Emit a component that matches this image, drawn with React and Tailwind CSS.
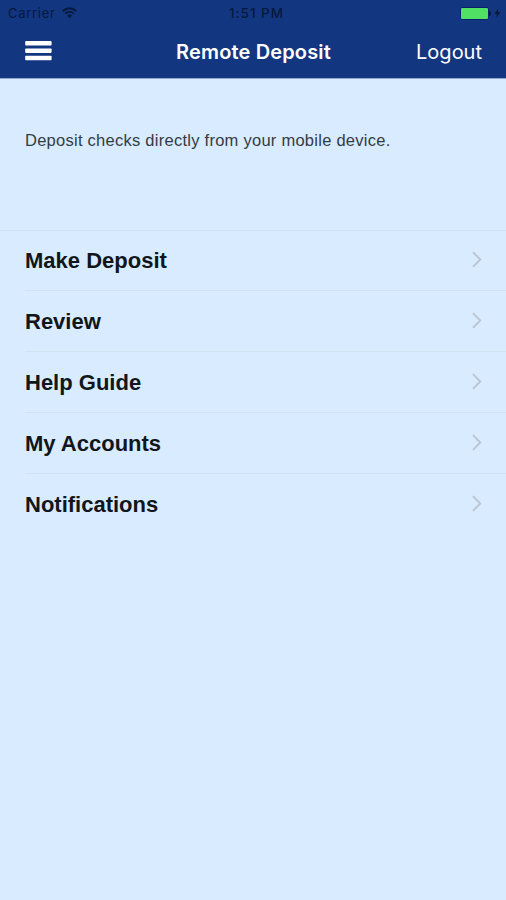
import React from "react";

const menuItems = ["Make Deposit", "Review", "Help Guide", "My Accounts", "Notifications"];

function WifiIcon() {
  return (
    <svg width="15" height="12" viewBox="0 0 15 12" fill="none" stroke="#08193f" strokeWidth="1.9">
      <path d="M0.8 4.1a9.4 9.4 0 0 1 13.4 0" />
      <path d="M3.2 6.7a6 6 0 0 1 8.6 0" />
      <path d="M7.5 11.2L5 8.8a3.5 3.5 0 0 1 5 0z" fill="#08193f" stroke="none" />
    </svg>
  );
}

function MenuIcon() {
  return (
    <svg width="27" height="20" viewBox="0 0 27 20" fill="white">
      <rect x="0.2" y="0.1" width="26.4" height="4.5" rx="0.8" />
      <rect x="0.2" y="7.4" width="26.4" height="4.5" rx="0.8" />
      <rect x="0.2" y="14.8" width="26.4" height="4.5" rx="0.8" />
    </svg>
  );
}

function StatusBar() {
  return (
    <div className="grid grid-cols-3 items-center h-[26px] pl-2 pr-[5px] text-[13px] text-[#08193f]">
      <div className="flex items-center gap-[6px]">
        <span className="pt-px tracking-[0.7px]">Carrier</span>
        <WifiIcon />
      </div>
      <span className="pt-px pl-1 text-center text-[13.5px] font-medium tracking-[1px]">1:51 PM</span>
      <div className="flex items-center justify-end">
        <div className="w-[29px] h-[13px] rounded-[2px] border border-[#08206a] bg-[#50e064]" />
        <div className="w-[2px] h-[5px] rounded-r bg-[#08193f]" />
        <svg className="ml-[3px]" width="7" height="10" viewBox="0 0 7 10" fill="#08193f">
          <path d="M4.4 0.5L0.5 5.8h2.3L2.4 9.5L6.5 4.1H3.9z" />
        </svg>
      </div>
    </div>
  );
}

function NavBar() {
  return (
    <div className="grid grid-cols-[1fr_auto_1fr] items-center h-[52px] pl-[25px] pr-6 text-white">
      <button className="justify-self-start -mt-[2px]">
        <MenuIcon />
      </button>
      <h1 className="text-[20px] leading-none font-semibold tracking-[0.15px]">Remote Deposit</h1>
      <button className="justify-self-end text-[20px] leading-none">Logout</button>
    </div>
  );
}

function MenuRow({ label, first, last }) {
  return (
    <li className={`ml-[25px] pr-6 flex items-center justify-between ${first ? "h-[60px]" : "h-[61px] pt-px"} ${last ? "" : "border-b border-[#d0e1f1]"}`}>
      <span className="text-[22px] leading-none font-bold text-[#11161a]">{label}</span>
      <svg className="-mt-[3px]" width="10" height="17" viewBox="0 0 10 17" fill="none" stroke="#bdc5d0" strokeWidth="1.9">
        <path d="M1 1.2l7.3 7.3L1 15.8" />
      </svg>
    </li>
  );
}

export default function App() {
  return (
    <div className="w-full h-[900px] bg-[#d9ebfe] font-['Liberation_Sans',sans-serif]">
      <header className="h-[79px] bg-[#123680] border-b border-[#8fa9cf] font-['Inter',sans-serif]">
        <StatusBar />
        <NavBar />
      </header>
      <p className="h-[151px] pt-[50px] pl-[25px] text-[16.5px] leading-[22px] tracking-[0.26px] text-[#323c46]">
        Deposit checks directly from your mobile device.
      </p>
      <ul className="border-t border-[#d0e1f1]">
        {menuItems.map((label, i) => (
          <MenuRow key={label} label={label} first={i === 0} last={i === menuItems.length - 1} />
        ))}
      </ul>
    </div>
  );
}
